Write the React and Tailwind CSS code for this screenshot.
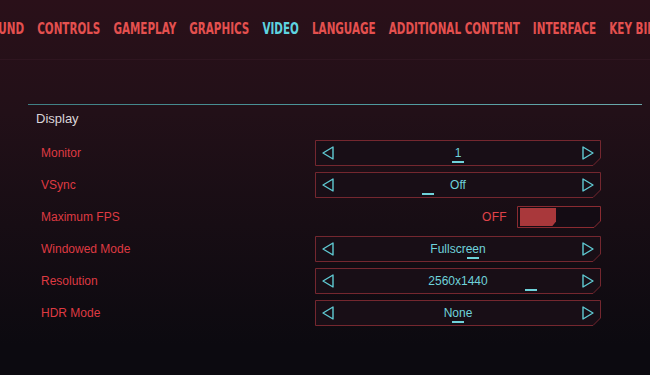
import React from 'react';

const tabs = ['SOUND', 'CONTROLS', 'GAMEPLAY', 'GRAPHICS', 'VIDEO', 'LANGUAGE', 'ADDITIONAL CONTENT', 'INTERFACE', 'KEY BINDINGS'];

const rows = [
  { label: 'Monitor', value: '1', bar: 137 },
  { label: 'VSync', value: 'Off', bar: 107 },
  { label: 'Maximum FPS', toggle: true },
  { label: 'Windowed Mode', value: 'Fullscreen', bar: 152 },
  { label: 'Resolution', value: '2560x1440', bar: 210 },
  { label: 'HDR Mode', value: 'None', bar: 137 },
];

function Arrow({ dir }) {
  const pts = dir === 'left' ? '11,1 1,7 11,13' : '1,1 11,7 1,13';
  return (
    <svg width="12" height="14" viewBox="0 0 12 14" className="shrink-0">
      <polygon points={pts} fill="none" stroke="#5fc9d2" strokeWidth="1.4" strokeLinejoin="round" />
    </svg>
  );
}

function Frame({ w, h, cut, stroke = '#74272f', fill = '#180e16' }) {
  return (
    <svg width={w} height={h} viewBox={`0 0 ${w} ${h}`} className="absolute inset-0">
      <polygon
        points={`0.5,0.5 ${w - 0.5},0.5 ${w - 0.5},${h - cut} ${w - cut},${h - 0.5} 0.5,${h - 0.5}`}
        fill={fill}
        stroke={stroke}
        strokeWidth="1"
      />
    </svg>
  );
}

function Selector({ value, bar }) {
  return (
    <div className="relative w-[286px] h-[26px]">
      <Frame w={286} h={26} cut={8} />
      <div className="relative flex items-center justify-between h-full pl-[7px] pr-[7px]">
        <Arrow dir="left" />
        <span className="text-[12px] text-[#6fd2da]">{value}</span>
        <Arrow dir="right" />
      </div>
      <div className="absolute top-[21px] h-[2px] w-[12px] bg-[#6fd2da]" style={{ left: bar }} />
    </div>
  );
}

function Toggle() {
  return (
    <div className="flex items-center justify-end gap-[10px] w-[286px]">
      <span className="text-[12px] text-[#e0434a] tracking-wide">OFF</span>
      <div className="relative w-[84px] h-[22px]">
        <Frame w={84} h={22} cut={7} stroke="#8a2b31" fill="#140c14" />
        <div className="absolute left-[3px] top-[2px] w-[36px] h-[18px] bg-[#a9383b] [clip-path:polygon(0_0,100%_0,100%_75%,90%_100%,0_100%)]" />
      </div>
    </div>
  );
}

export default function App() {
  return (
    <div
      className="w-[650px] h-[375px] overflow-hidden bg-[linear-gradient(180deg,#2a1019_0%,#221018_30%,#170d14_60%,#0c0a10_92%)]"
      style={{ fontFamily: '"Liberation Sans", Arial, sans-serif' }}
    >
      {/* Tabs */}
      <div className="h-[60px] flex items-center overflow-hidden border-b border-[#2f1520]">
        <div
          className="flex gap-[17px] -ml-[18px] origin-left scale-x-[0.77] whitespace-nowrap text-[15px] font-bold"
          style={{ fontFamily: '"DejaVu Sans Condensed", "Liberation Sans", sans-serif' }}
        >
          {tabs.map((t) => (
            <span key={t} className={t === 'VIDEO' ? 'text-[#5ed4e0]' : 'text-[#e4504f]'}>
              {t}
            </span>
          ))}
        </div>
      </div>

      {/* Display section */}
      <div className="pl-[28px] pr-[8px] mt-[44px]">
        <div className="h-px bg-[linear-gradient(90deg,#3f7f84,#4f9ba0_60%,#6aa8ab)]" />
        <div className="h-[28px] flex items-center pl-[8px] text-[13px] text-[#d9d5d8]">Display</div>
        <div className="mt-[4px]">
          {rows.map((r) => (
            <div key={r.label} className="h-[32px] flex items-center">
              <div className="w-[287px] pl-[13px] text-[12px] text-[#df3a42]">{r.label}</div>
              {r.toggle ? <Toggle /> : <Selector value={r.value} bar={r.bar} />}
            </div>
          ))}
        </div>
      </div>
    </div>
  );
}
